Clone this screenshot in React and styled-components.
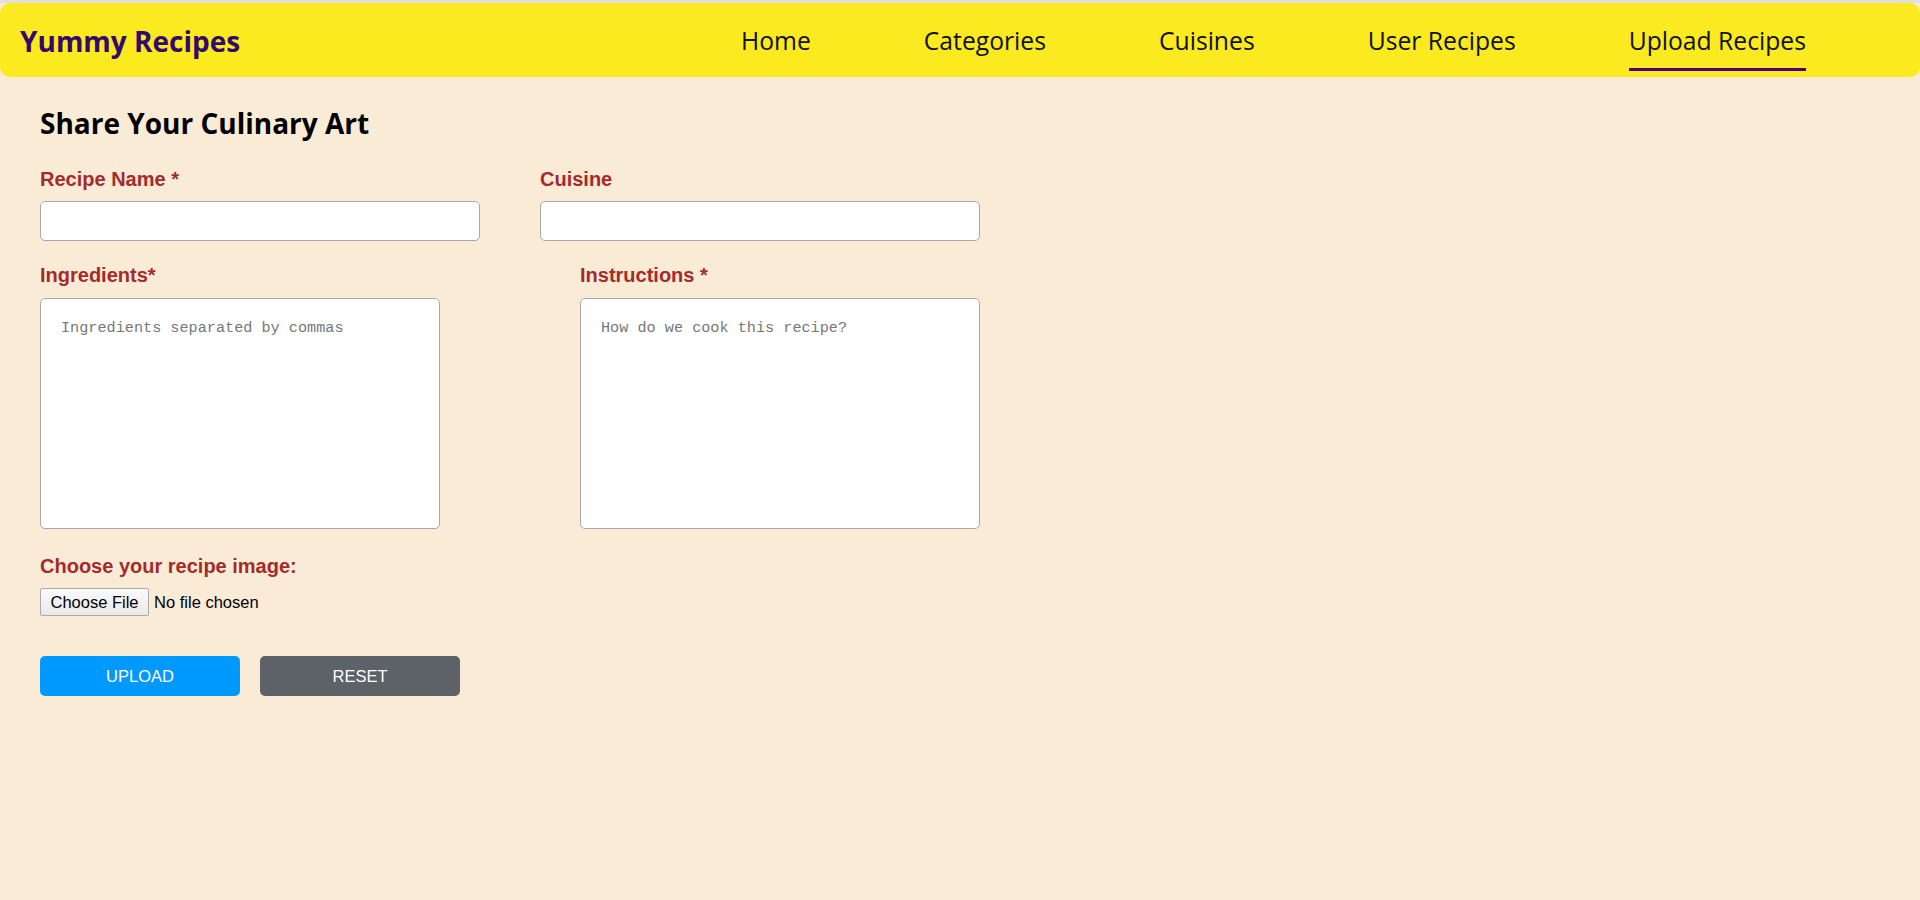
import React from 'react';
import styled, { createGlobalStyle } from 'styled-components';

const GlobalStyle = createGlobalStyle`
  html, body {
    margin: 0;
    padding: 0;
    background-color: #FAEBD7;
  }
  body {
    border-top: 3px solid #E0E0E0;
    min-height: 897px;
  }
  * {
    box-sizing: border-box;
  }
`;

const Navbar = styled.header`
  height: 74px;
  background-color: #FBEA20;
  border-radius: 10px;
  display: flex;
  align-items: center;
  justify-content: space-between;
  padding: 1px 114px 0 20px;
  font-family: 'Open Sans', 'Noto Sans', sans-serif;
`;

const Logo = styled.div`
  font-size: 28px;
  font-weight: 700;
  color: #33096E;
`;

const NavList = styled.nav`
  display: flex;
  align-items: center;
  gap: 113px;
`;

const NavLink = styled.a`
  position: relative;
  font-size: 24.7px;
  color: #111111;
  text-decoration: none;
  cursor: pointer;
  line-height: 30px;

  &::after {
    content: '';
    position: absolute;
    left: 0;
    right: 0;
    bottom: -15px;
    height: 3px;
    background-color: ${(p) => (p.$active ? '#4B0082' : 'transparent')};
  }
`;

const Main = styled.main`
  padding: 0 40px;
`;

const Heading = styled.h2`
  font-family: 'Open Sans', 'Noto Sans', sans-serif;
  font-size: 28px;
  font-weight: 700;
  color: #000000;
  margin: 27px 0 26px;
  line-height: 38px;
`;

const Form = styled.form`
  display: flex;
  flex-direction: column;
`;

const Row = styled.div`
  display: flex;
  gap: ${(p) => p.$gap}px;
  margin-bottom: ${(p) => p.$space}px;
`;

const Field = styled.div`
  display: flex;
  flex-direction: column;
  width: ${(p) => p.$width}px;
`;

const Label = styled.label`
  font-family: 'Liberation Sans', Arial, sans-serif;
  font-size: 20px;
  font-weight: 700;
  color: #A52A2A;
  line-height: 23px;
  margin-bottom: ${(p) => p.$space || 10}px;
`;

const TextInput = styled.input`
  height: 40px;
  width: 100%;
  border: 1px solid #AAAAAA;
  border-radius: 5px;
  background: #FFFFFF;
  padding: 0 10px;
  font-size: 16px;
  outline: none;
`;

const TextArea = styled.textarea`
  height: 231px;
  width: 100%;
  border: 1px solid #AAAAAA;
  border-radius: 5px;
  background: #FFFFFF;
  padding: 20px;
  font-family: 'Liberation Mono', 'DejaVu Sans Mono', monospace;
  font-size: 15.2px;
  resize: none;
  outline: none;

  &::placeholder {
    color: #777777;
  }
`;

const FileInput = styled.input`
  font-family: 'Liberation Sans', Arial, sans-serif;
  font-size: 16.5px;
  color: #000000;
  height: 28px;

  &::file-selector-button {
    font-family: 'Liberation Sans', Arial, sans-serif;
    font-size: 16.5px;
    height: 28px;
    padding: 0 9.5px;
    margin-right: 5px;
    border: 1px solid #ABABAB;
    border-radius: 2px;
    background: linear-gradient(#FAFAFA, #E9E9E9);
    color: #000000;
    cursor: pointer;
  }
`;

const Actions = styled.div`
  display: flex;
  gap: 20px;
  margin-top: 40px;
`;

const Button = styled.button`
  width: 200px;
  height: 40px;
  border: none;
  border-radius: 5px;
  background-color: ${(p) => p.$bg};
  color: #FFFFFF;
  font-family: 'Liberation Sans', Arial, sans-serif;
  font-size: 16.5px;
  text-transform: uppercase;
  cursor: pointer;
`;

const navItems = ['Home', 'Categories', 'Cuisines', 'User Recipes', 'Upload Recipes'];

const App = () => {
  const handleSubmit = (e) => {
    e.preventDefault();
  };

  return (
    <>
      <GlobalStyle />
      <Navbar>
        <Logo>Yummy Recipes</Logo>
        <NavList>
          {navItems.map((item) => (
            <NavLink key={item} $active={item === 'Upload Recipes'}>
              {item}
            </NavLink>
          ))}
        </NavList>
      </Navbar>

      <Main>
        <Heading>Share Your Culinary Art</Heading>
        <Form onSubmit={handleSubmit}>
          <Row $gap={60} $space={23}>
            <Field $width={440}>
              <Label>Recipe Name *</Label>
              <TextInput type="text" />
            </Field>
            <Field $width={440}>
              <Label>Cuisine</Label>
              <TextInput type="text" />
            </Field>
          </Row>

          <Row $gap={140} $space={26}>
            <Field $width={400}>
              <Label $space={11}>Ingredients*</Label>
              <TextArea placeholder="Ingredients separated by commas" />
            </Field>
            <Field $width={400}>
              <Label $space={11}>Instructions *</Label>
              <TextArea placeholder="How do we cook this recipe?" />
            </Field>
          </Row>

          <Field $width={600}>
            <Label>Choose your recipe image:</Label>
            <div>
              <FileInput type="file" accept="image/*" />
            </div>
          </Field>

          <Actions>
            <Button type="submit" $bg="#0099FF">Upload</Button>
            <Button type="reset" $bg="#5C6268">Reset</Button>
          </Actions>
        </Form>
      </Main>
    </>
  );
};

export default App;
